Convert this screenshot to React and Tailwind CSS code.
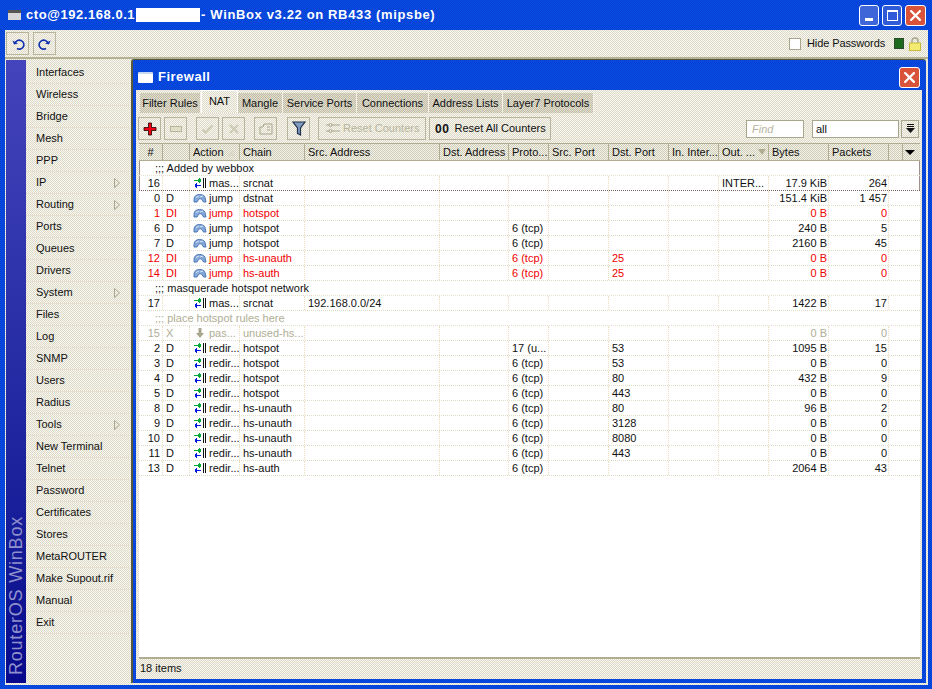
import React from "react";

const dither = "bg-[image:repeating-conic-gradient(#dcd9c8_0_25%,#f8f7f0_0_50%)] bg-[length:2px_2px]";
const blueDither = "bg-[image:repeating-conic-gradient(#0a3cd0_0_25%,#0550e6_0_50%)] bg-[length:2px_2px]";
const tabDither = "bg-[image:repeating-conic-gradient(#c0bca8_0_25%,#e2dfcf_0_50%)] bg-[length:2px_2px]";
const headDither = "bg-[image:repeating-conic-gradient(#cfccb8_0_25%,#f4f3ea_0_50%)] bg-[length:2px_2px]";

const menu = [
  ["Interfaces"], ["Wireless"], ["Bridge"], ["Mesh"], ["PPP"], ["IP", 1], ["Routing", 1], ["Ports"], ["Queues"], ["Drivers"],
  ["System", 1], ["Files"], ["Log"], ["SNMP"], ["Users"], ["Radius"], ["Tools", 1], ["New Terminal"], ["Telnet"], ["Password"],
  ["Certificates"], ["Stores"], ["MetaROUTER"], ["Make Supout.rif"], ["Manual"], ["Exit"],
];

const tabs = ["Filter Rules", "NAT", "Mangle", "Service Ports", "Connections", "Address Lists", "Layer7 Protocols"];
const tabW = ["w-[61px]", "w-[37px]", "w-[45px]", "w-[74px]", "w-[72px]", "w-[74px]", "w-[91px]"];

const grid = "grid grid-cols-[24px_27px_50px_65px_135px_69px_40px_60px_60px_50px_50px_60px_60px]";
const heads = ["#", "", "Action", "Chain", "Src. Address", "Dst. Address", "Proto...", "Src. Port", "Dst. Port", "In. Inter...", "Out. ...", "Bytes", "Packets"];

const rows = [
  { c: ";;; Added by webbox", box: 1 },
  { r: ["16", "", "m", "mas...", "srcnat", "", "", "", "INTER...", "17.9 KiB", "264"], box: 1 },
  { r: ["0", "D", "j", "jump", "dstnat", "", "", "", "", "151.4 KiB", "1 457"] },
  { r: ["1", "DI", "j", "jump", "hotspot", "", "", "", "", "0 B", "0"], t: "red" },
  { r: ["6", "D", "j", "jump", "hotspot", "", "6 (tcp)", "", "", "240 B", "5"] },
  { r: ["7", "D", "j", "jump", "hotspot", "", "6 (tcp)", "", "", "2160 B", "45"] },
  { r: ["12", "DI", "j", "jump", "hs-unauth", "", "6 (tcp)", "25", "", "0 B", "0"], t: "red" },
  { r: ["14", "DI", "j", "jump", "hs-auth", "", "6 (tcp)", "25", "", "0 B", "0"], t: "red" },
  { c: ";;; masquerade hotspot network" },
  { r: ["17", "", "m", "mas...", "srcnat", "192.168.0.0/24", "", "", "", "1422 B", "17"] },
  { c: ";;; place hotspot rules here", t: "off" },
  { r: ["15", "X", "p", "pas...", "unused-hs...", "", "", "", "", "0 B", "0"], t: "off" },
  { r: ["2", "D", "m", "redir...", "hotspot", "", "17 (u...", "53", "", "1095 B", "15"] },
  { r: ["3", "D", "m", "redir...", "hotspot", "", "6 (tcp)", "53", "", "0 B", "0"] },
  { r: ["4", "D", "m", "redir...", "hotspot", "", "6 (tcp)", "80", "", "432 B", "9"] },
  { r: ["5", "D", "m", "redir...", "hotspot", "", "6 (tcp)", "443", "", "0 B", "0"] },
  { r: ["8", "D", "m", "redir...", "hs-unauth", "", "6 (tcp)", "80", "", "96 B", "2"] },
  { r: ["9", "D", "m", "redir...", "hs-unauth", "", "6 (tcp)", "3128", "", "0 B", "0"] },
  { r: ["10", "D", "m", "redir...", "hs-unauth", "", "6 (tcp)", "8080", "", "0 B", "0"] },
  { r: ["11", "D", "m", "redir...", "hs-unauth", "", "6 (tcp)", "443", "", "0 B", "0"] },
  { r: ["13", "D", "m", "redir...", "hs-auth", "", "6 (tcp)", "", "", "2064 B", "43"] },
];

const Arrows = () => (
  <svg width="14" height="10" viewBox="0 0 14 10" className="shrink-0" shapeRendering="crispEdges">
    <rect x="1" y="2" width="6" height="1" fill="#00a838" />
    <rect x="5" y="1" width="1" height="3" fill="#00a838" />
    <rect x="6" y="0" width="1" height="5" fill="#00a838" />
    <rect x="7" y="1" width="1" height="3" fill="#00a838" />
    <rect x="2" y="7" width="6" height="1" fill="#0018e0" />
    <rect x="3" y="5" width="1" height="5" fill="#0018e0" />
    <rect x="2" y="6" width="1" height="3" fill="#0018e0" />
    <rect x="10" y="0" width="1" height="10" fill="#111" />
    <rect x="12" y="0" width="1" height="10" fill="#111" />
  </svg>
);
const Jump = () => (
  <svg width="14" height="10" viewBox="0 0 14 10" className="shrink-0">
    <path d="M1 9V6.5C1 3 3.5 1.5 6.5 1.5c3 0 5 1 5.5 3L13 9h-2.5L9 6.5C8 5.5 6.5 5.5 5.5 6.5L4 9z" fill="#86a8d8" stroke="#4a78b8" strokeWidth="1" />
    <path d="M3 4.5l3-1.5M7 4l3-1" stroke="#dce6f4" strokeWidth="1" />
  </svg>
);
const Pass = () => (
  <svg width="14" height="10" viewBox="0 0 14 10" className="shrink-0">
    <path d="M5.5 0h3v5h2.5L7 10 3 5h2.5z" fill="#a8a68c" />
  </svg>
);

const X = ({ size = 9 }) => (
  <svg width={size} height={size} viewBox="0 0 10 10">
    <path d="M1 1l8 8M9 1L1 9" stroke="#fff" strokeWidth="2" strokeLinecap="square" />
  </svg>
);

const ToolBtn = ({ children, className = "" }) => (
  <div className={`h-[23px] w-[23px] shrink-0 flex items-center justify-center border border-[#b8b59c] ${className}`}>{children}</div>
);

const cellLine = "border-r border-dotted border-[#eadfc0]";

export default function App() {
  return (
    <div className={`w-[932px] h-[689px] overflow-hidden flex flex-col text-[11px] text-[#111] ${blueDither} font-['Liberation_Sans',Arial,sans-serif]`}>
      {/* Title bar */}
      <div className="h-[30px] shrink-0 flex items-center pl-[8px] pr-[6px]">
        <div className="w-[13px] h-[10px] bg-[#d8d8d8] border-t-[3px] border-[#555] mr-[5px]" />
        <div className="text-white font-bold text-[13px] tracking-[0.55px] flex items-center whitespace-nowrap">
          <span>cto@192.168.0.1</span>
          <span className="inline-block w-[64px] h-[14px] bg-white ml-[1px]" />
          <span className="tracking-[0.64px] ml-[1px]">- WinBox v3.22 on RB433 (mipsbe)</span>
        </div>
        <div className="ml-auto flex gap-[3px] items-center">
          <div className="w-[20px] h-[21px] rounded-[3px] border border-white bg-[#3f66d8] flex items-end justify-center pb-[4px]"><div className="w-[8px] h-[3px] bg-white" /></div>
          <div className="w-[20px] h-[21px] rounded-[3px] border border-white bg-[#2f5ad8] flex items-center justify-center"><div className="w-[11px] h-[11px] border border-white border-t-[2px]" /></div>
          <div className="w-[21px] h-[21px] rounded-[3px] border border-white bg-[#d9533a] flex items-center justify-center"><X size={11} /></div>
        </div>
      </div>

      <div className={`ml-[5px] mr-[4px] flex-1 min-h-0 flex flex-col ${dither}`}>
        {/* Main toolbar */}
        <div className="h-[29px] shrink-0 flex items-center pl-[1px] pr-[7px] gap-[4px] border-b-2 border-[#b5b293]">
          <ToolBtn className="w-[22px]">
            <svg width="14" height="14" viewBox="0 0 14 14" fill="none" stroke="#1030b0" strokeWidth="1.6">
              <path d="M4 6.5a4.5 4.5 0 1 1 2 5" />
              <path d="M1.5 3.5l1.5 4 4-1z" fill="#1030b0" stroke="none" />
            </svg>
          </ToolBtn>
          <ToolBtn className="w-[22px]">
            <svg width="14" height="14" viewBox="0 0 14 14" fill="none" stroke="#1030b0" strokeWidth="1.6">
              <path d="M10 6.5a4.5 4.5 0 1 0-2 5" />
              <path d="M12.5 3.5l-1.5 4-4-1z" fill="#1030b0" stroke="none" />
            </svg>
          </ToolBtn>
          <div className="ml-auto flex items-center">
            <div className="w-[12px] h-[12px] bg-white border border-[#a8a68c] mr-[6px]" />
            <span className="mr-[10px] w-[77px] whitespace-nowrap tracking-[-0.1px]">Hide Passwords</span>
            <div className="w-[10px] h-[11px] bg-[#1c6a1c] border border-[#2c4a2c] mr-[5px]" />
            <svg width="12" height="14" viewBox="0 0 12 14">
              <path d="M3 6V4a3 3 0 0 1 6 0v2" fill="none" stroke="#a8a68c" strokeWidth="1.4" />
              <rect x="0.5" y="6" width="11" height="7.5" fill="#f4ec70" stroke="#c8b840" />
            </svg>
          </div>
        </div>

        <div className="flex-1 min-h-0 flex pt-[1px] pr-[2px] pb-[2px]">
          {/* Sidebar */}
          <div className="ml-[1px] w-[20px] shrink-0 flex items-end justify-center pb-[8px] bg-gradient-to-b from-[#4444bc] to-[#08088c]">
            <span className="[writing-mode:vertical-rl] rotate-180 text-[#9090cc] text-[18px] tracking-[0.8px] leading-none whitespace-nowrap">RouterOS WinBox</span>
          </div>
          <div className="w-[104px] shrink-0 pt-[2px]">
            {menu.map(([name, sub]) => (
              <div key={name} className="h-[22px] flex items-center pl-[10px] pr-[10px] border-b border-[#e6dfd0]">
                <span className="flex-1">{name}</span>
                {sub && <svg width="6" height="10" viewBox="0 0 6 10"><path d="M.5.5l5 4.5-5 4.5z" fill="none" stroke="#a8a68c" /></svg>}
              </div>
            ))}
          </div>

          {/* Firewall window */}
          <div className={`flex-1 min-w-0 ml-[1px] -mt-[1px] flex flex-col rounded-t-[3px] border-l-[2px] border-t border-[#5a5a3c] ${blueDither}`}>
            <div className="h-[30px] shrink-0 flex items-center pl-[5px] pr-[6px] pt-[4px]">
              <div className="w-[15px] h-[11px] bg-white rounded-[1px] border-t-2 border-[#c8d8f0] mr-[5px]" />
              <span className="text-white font-bold text-[13px] tracking-[0.5px]">Firewall</span>
              <div className="ml-auto w-[21px] h-[21px] rounded-[3px] border border-white bg-[#d9533a] flex items-center justify-center"><X size={11} /></div>
            </div>
            <div className={`flex-1 min-h-0 flex flex-col ml-[3px] mr-[4px] mb-[4px] ${dither}`}>
              {/* Tabs */}
              <div className="h-[23px] shrink-0 flex items-end pl-[4px]">
                {tabs.map((t, i) => (
                  <div key={t} className={`${tabW[i]} text-center whitespace-nowrap ${i === 1 ? `h-[23px] leading-[21px] border-x border-t border-white ${dither}` : `h-[20px] leading-[20px] border-r border-[#f4f2e8] ${tabDither}`}`}>{t}</div>
                ))}
              </div>
              {/* Toolbar */}
              <div className="h-[28px] shrink-0 flex items-center pl-[2px] pr-[3px] pt-[3px]">
                <ToolBtn>
                  <svg width="14" height="14" viewBox="0 0 14 14"><path d="M5.5 1h3v4.5H13v3H8.5V13h-3V8.5H1v-3h4.5z" fill="#f00010" stroke="#200" strokeWidth="0.8" /></svg>
                </ToolBtn>
                <ToolBtn className="ml-[3px]">
                  <svg width="12" height="6" viewBox="0 0 12 6"><rect x=".5" y=".5" width="11" height="5" fill="#e0ddc8" stroke="#b8b59c" /></svg>
                </ToolBtn>
                <ToolBtn className="ml-[9px]">
                  <svg width="13" height="12" viewBox="0 0 13 12"><path d="M1.5 6.5l3 3 7-7" fill="none" stroke="#cdcbb4" strokeWidth="2" /></svg>
                </ToolBtn>
                <ToolBtn className="ml-[3px]">
                  <svg width="12" height="12" viewBox="0 0 12 12"><path d="M2 2l8 8M10 2l-8 8" fill="none" stroke="#cdcbb4" strokeWidth="2" /></svg>
                </ToolBtn>
                <ToolBtn className="ml-[9px]">
                  <svg width="14" height="12" viewBox="0 0 14 12"><path d="M1 4h3l1-3h8v10H1z" fill="none" stroke="#a8a68c" /><path d="M8 4h3M8 7h3" stroke="#a8a68c" /></svg>
                </ToolBtn>
                <ToolBtn className="ml-[10px]">
                  <svg width="14" height="15" viewBox="0 0 14 15"><path d="M1 1h12L8.5 7v7l-3-1.5V7z" fill="#7f9cc0" stroke="#20304a" strokeWidth="1.2" /></svg>
                </ToolBtn>
                <div className="ml-[8px] h-[23px] w-[108px] shrink-0 border border-[#b8b59c] flex items-center pl-[7px] text-[#b8b59c] whitespace-nowrap">
                  <svg width="14" height="11" viewBox="0 0 14 11" className="mr-[3px] shrink-0"><path d="M0 2h3M6 2h8M0 8h3M6 8h8" stroke="#a8a68c" /><circle cx="4.5" cy="2" r="1.5" fill="none" stroke="#a8a68c" /><circle cx="4.5" cy="8" r="1.5" fill="none" stroke="#a8a68c" /></svg>
                  Reset Counters
                </div>
                <div className="ml-[3px] h-[23px] w-[122px] shrink-0 border border-[#b8b59c] flex items-center pl-[5px] whitespace-nowrap">
                  <span className="font-bold tracking-[0.6px] text-[12px] mr-[5px] leading-none">00</span>
                  Reset All Counters
                </div>
                <div className="ml-auto w-[58px] h-[18px] border border-[#a8a68c] bg-white pl-[5px] leading-[16px] italic text-[#b8b59c]">Find</div>
                <div className="ml-[8px] w-[87px] h-[18px] border border-[#a8a68c] bg-white pl-[3px] leading-[16px]">all</div>
                <div className="ml-[2px] w-[18px] h-[18px] border border-[#a8a68c] flex items-center justify-center">
                  <svg width="9" height="10" viewBox="0 0 9 10"><path d="M1 .5h7M1 2.5h7" stroke="#111" /><path d="M0 4h9L4.5 9z" fill="#111" /></svg>
                </div>
              </div>

              {/* Table */}
              <div className="flex-1 min-h-0 flex flex-col ml-[3px] mr-[2px] mt-[2px] min-w-0">
                <div className={`h-[18px] shrink-0 flex border-y border-[#b0ad92] ${headDither}`}>
                  <div className={`${grid} w-[750px] shrink-0`}>
                    {heads.map((h, i) => (
                      <div key={i} className={`border-r border-[#b0ad92] leading-[17px] px-[3px] whitespace-nowrap relative ${i === 0 ? "text-center" : ""}`}>
                        {h}
                        {i === 2 && <span className="absolute right-[3px] top-[6px] w-0 h-0 border-x-[4px] border-x-transparent border-b-[6px] border-b-[#dcd9c8]" />}
                        {i === 10 && <span className="absolute right-[2px] top-[5px] w-0 h-0 border-x-[4px] border-x-transparent border-t-[6px] border-t-[#b0ad92]" />}
                      </div>
                    ))}
                  </div>
                  <div className="w-[14px] border-r border-[#b0ad92]" />
                  <div className="flex-1 flex items-center justify-center pr-[3px]">
                    <div className="w-0 h-0 border-x-[5px] border-x-transparent border-t-[5px] border-t-black" />
                  </div>
                </div>
                <div className="flex-1 min-h-0 bg-white">
                  {rows.map((row, idx) => {
                    const tone = row.t === "red" ? "text-[#f00000]" : row.t === "off" ? "text-[#b0ae94]" : "text-[#111]";
                    const box = row.box ? "shadow-[inset_1px_0_0_#a09090,inset_-1px_0_0_#a09090]" : "";
                    if (row.c) {
                      return (
                        <div key={idx} className={`h-[15px] leading-[14px] pl-[16px] whitespace-nowrap border-b border-dotted border-[#e6dfd0] ${tone} ${box}`}>
                          {row.c}
                        </div>
                      );
                    }
                    const [n, f, ic, act, ch, src, proto, dp, out, by, pk] = row.r;
                    return (
                      <div key={idx} className={`${grid} h-[15px] leading-[14px] border-b border-dotted ${row.box ? "border-[#806060]" : "border-[#e0dcc8]"} ${tone} ${box} whitespace-nowrap`}>
                        <div className={`text-right pr-[2px] ${cellLine}`}>{n}</div>
                        <div className={`pl-[3px] ${cellLine}`}>{f}</div>
                        <div className={`pl-[3px] flex items-center gap-[2px] ${cellLine}`}>
                          {ic === "m" ? <Arrows /> : ic === "j" ? <Jump /> : <Pass />}
                          <span>{act}</span>
                        </div>
                        <div className={`pl-[3px] ${cellLine}`}>{ch}</div>
                        <div className={`pl-[3px] ${cellLine}`}>{src}</div>
                        <div className={cellLine} />
                        <div className={`pl-[3px] overflow-hidden ${cellLine}`}>{proto}</div>
                        <div className={cellLine} />
                        <div className={`pl-[3px] ${cellLine}`}>{dp}</div>
                        <div className={cellLine} />
                        <div className={`pl-[3px] overflow-hidden ${cellLine}`}>{out}</div>
                        <div className={`text-right pr-[1px] ${cellLine}`}>{by}</div>
                        <div className={`text-right pr-[1px] ${cellLine}`}>{pk}</div>
                      </div>
                    );
                  })}
                </div>
                <div className="h-[22px] shrink-0 border-t-2 border-[#b0ad92] pl-[1px] leading-[18px]">18 items</div>
              </div>
            </div>
          </div>
        </div>
      </div>
      <div className="h-[4px] shrink-0" />
    </div>
  );
}
